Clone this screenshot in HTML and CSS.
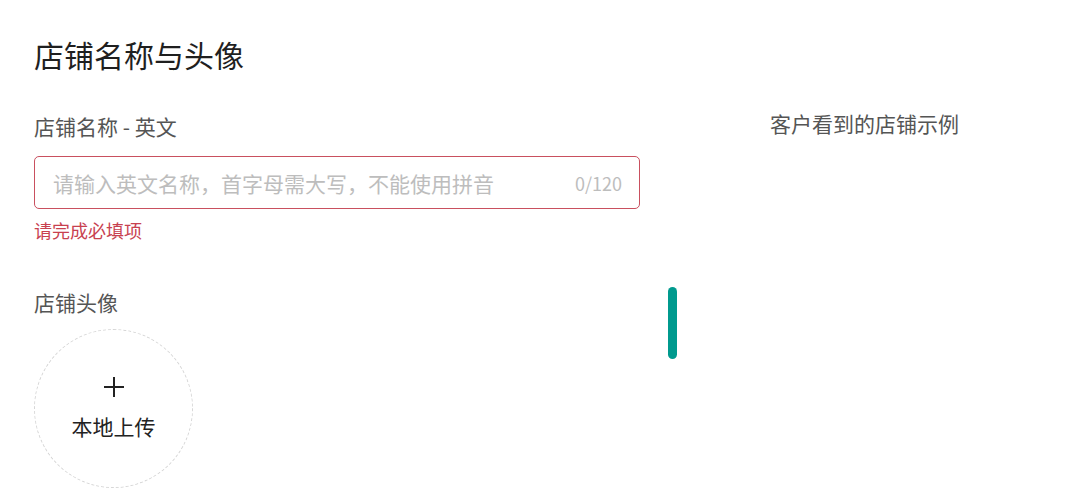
FILE: index.html
```html
<!DOCTYPE html>
<html lang="zh-CN">
<head>
<meta charset="utf-8">
<title>店铺名称与头像</title>
<link rel="stylesheet" href="styles.css">
</head>
<body>
<div class="page">
  <h1 class="title">店铺名称与头像</h1>
  <div class="row">
    <div class="form">
      <div class="label">店铺名称 - 英文</div>
      <div class="input error">
        <span class="placeholder">请输入英文名称，首字母需大写，不能使用拼音</span>
        <span class="count">0/120</span>
      </div>
      <div class="err-msg">请完成必填项</div>
      <div class="label avatar-label">店铺头像</div>
      <div class="upload">
        <span class="plus"></span>
        <span class="upload-text">本地上传</span>
      </div>
    </div>
    <div class="bar-col"><div class="bar"></div></div>
    <div class="preview">客户看到的店铺示例</div>
  </div>
</div>
</body>
</html>
```
FILE: styles.css
```css
html, body {
  margin: 0;
  padding: 0;
  background: #fff;
  font-family: "Noto Sans CJK SC", "Noto Sans", sans-serif;
}
.page {
  padding: 34px 0 0 34px;
}
.title {
  margin: 0;
  font-size: 30px;
  line-height: 40px;
  font-weight: 400;
  color: #1f1f1f;
}
.row {
  display: flex;
  align-items: flex-start;
  margin-top: 37px;
}
.form {
  width: 606px;
  display: flex;
  flex-direction: column;
}
.label {
  font-size: 21px;
  line-height: 30px;
  color: #555;
}
.input {
  margin-top: 15px;
  height: 53px;
  box-sizing: border-box;
  border: 1px solid #c9505f;
  border-radius: 5px;
  display: flex;
  align-items: center;
  justify-content: space-between;
  padding: 0 17px 0 18px;
}
.placeholder {
  font-size: 21px;
  color: #bdbdbd;
}
.count {
  font-size: 18px;
  color: #bdbdbd;
}
.err-msg {
  margin-top: 9px;
  font-size: 18px;
  line-height: 24px;
  color: #c8414f;
}
.avatar-label {
  margin-top: 45px;
}
.upload {
  margin-top: 12px;
  width: 159px;
  height: 159px;
  box-sizing: border-box;
  border: 1px dashed #d6d6d6;
  border-radius: 50%;
  display: flex;
  flex-direction: column;
  align-items: center;
  justify-content: center;
}
.plus {
  position: relative;
  width: 20px;
  height: 20px;
  margin-top: 0;
}
.plus::before, .plus::after {
  content: "";
  position: absolute;
  background: #222;
}
.plus::before {
  left: 0;
  right: 0;
  top: 9px;
  height: 2px;
}
.plus::after {
  top: 0;
  bottom: 0;
  left: 9px;
  width: 2px;
}
.upload-text {
  margin-top: 14px;
  font-size: 21px;
  line-height: 30px;
  color: #222;
}
.bar-col {
  margin-left: 28px;
  padding-top: 176px;
}
.bar {
  width: 9px;
  height: 72px;
  border-radius: 5px;
  background: #009a8e;
}
.preview {
  margin-left: 93px;
  margin-top: -3px;
  font-size: 21px;
  line-height: 30px;
  color: #555;
}
```
